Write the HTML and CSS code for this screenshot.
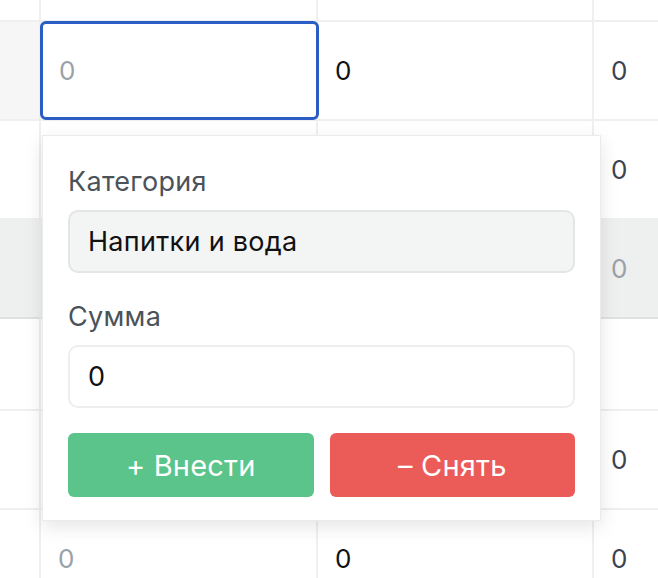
FILE: index.html
```html
<!DOCTYPE html>
<html lang="ru">
<head>
<meta charset="utf-8">
<title>Бюджет</title>
<link rel="stylesheet" href="styles.css">
</head>
<body>
<div class="sheet">
  <div class="row row-top">
    <div class="cell c1"></div>
    <div class="cell c2"></div>
    <div class="cell c3"></div>
    <div class="cell c4"></div>
  </div>
  <div class="row">
    <div class="cell c1 tinted"></div>
    <div class="cell c2 editing">
      <input class="cell-input" type="text" placeholder="0">
    </div>
    <div class="cell c3 val-dark">0</div>
    <div class="cell c4 val-slate">0</div>
  </div>
  <div class="row row-b">
    <div class="cell c1"></div>
    <div class="cell c2"></div>
    <div class="cell c3"></div>
    <div class="cell c4 val-slate">0</div>
  </div>
  <div class="row row-total">
    <div class="cell c1"></div>
    <div class="cell c2"></div>
    <div class="cell c3"></div>
    <div class="cell c4 val-muted">0</div>
  </div>
  <div class="row row-short">
    <div class="cell c1"></div>
    <div class="cell c2"></div>
    <div class="cell c3"></div>
    <div class="cell c4"></div>
  </div>
  <div class="row row-b">
    <div class="cell c1"></div>
    <div class="cell c2"></div>
    <div class="cell c3"></div>
    <div class="cell c4 val-slate">0</div>
  </div>
  <div class="row row-b">
    <div class="cell c1"></div>
    <div class="cell c2 val-muted">0</div>
    <div class="cell c3 val-dark">0</div>
    <div class="cell c4 val-slate">0</div>
  </div>

  <div class="popover">
    <div class="field">
      <div class="field-label">Категория</div>
      <div class="select">Напитки и вода</div>
    </div>
    <div class="field">
      <div class="field-label">Сумма</div>
      <div class="amount">0</div>
    </div>
    <div class="actions">
      <button class="btn btn-in" type="button">+ Внести</button>
      <button class="btn btn-out" type="button">– Снять</button>
    </div>
  </div>
</div>
</body>
</html>
```

FILE: styles.css
```css
* { box-sizing: border-box; }

html, body {
  margin: 0;
  padding: 0;
  background: #ffffff;
}

body {
  font-family: Inter, "Noto Sans", "Liberation Sans", sans-serif;
  overflow: hidden;
}

.sheet {
  position: relative;
  margin-top: -78px;
}

.row {
  display: grid;
  grid-template-columns: 41px 277px 276px 1fr;
  height: 99px;
}

.row-top { height: 100px; }
.row-b { height: 99px; }
.row-short { height: 92px; }

.cell {
  display: flex;
  align-items: center;
  border-right: 2px solid #efefef;
  border-bottom: 2px solid #efefef;
  font-size: 26px;
  padding-left: 17px;
}

.c1 { padding-left: 0; }
.c4 { border-right: none; }

.tinted { background: #f6f6f6; }

.row-total .cell {
  background: #eeefef;
  border-bottom-color: #dfe1e1;
}

.val-dark { color: #111111; }
.val-slate { color: #3c4350; }
.val-muted { color: #9aa1a7; }

.editing { position: relative; }

.cell-input {
  position: absolute;
  top: -1px;
  left: -1px;
  right: -3px;
  bottom: -1px;
  border: 3px solid #2a5ec4;
  border-radius: 6px;
  background: #ffffff;
  font: inherit;
  font-size: 26px;
  padding: 0 0 0 16px;
  outline: none;
  color: #111;
}

.cell-input::placeholder { color: #9aa1a7; }

.popover {
  position: absolute;
  left: 42px;
  top: 213px;
  width: 559px;
  height: 386px;
  background: #ffffff;
  border: 1px solid #ebebeb;
  box-shadow: 0 6px 18px rgba(0, 0, 0, 0.10);
  padding: 30px 25px 23px 25px;
  display: flex;
  flex-direction: column;
}

.field {
  display: flex;
  flex-direction: column;
  gap: 12px;
}

.field + .field { margin-top: 28px; }

.field-label {
  font-size: 27px;
  line-height: 32px;
  letter-spacing: 0.3px;
  color: #4b5259;
}

.select,
.amount {
  height: 63px;
  border-radius: 10px;
  display: flex;
  align-items: center;
  padding-left: 18px;
  font-size: 27px;
  letter-spacing: 0.3px;
  color: #111111;
}

.select {
  background: #f3f4f4;
  border: 2px solid #e4e6e6;
}

.amount {
  background: #ffffff;
  border: 2px solid #eeeeee;
}

.actions {
  display: grid;
  grid-template-columns: 1fr 1fr;
  gap: 16px;
  margin-top: 25px;
}

.btn {
  height: 64px;
  border: none;
  border-radius: 6px;
  color: #ffffff;
  font-family: inherit;
  font-size: 29px;
  letter-spacing: 0.2px;
  cursor: pointer;
}

.btn-in { background: #5ac48a; }
.btn-out { background: #eb5b57; }
```
